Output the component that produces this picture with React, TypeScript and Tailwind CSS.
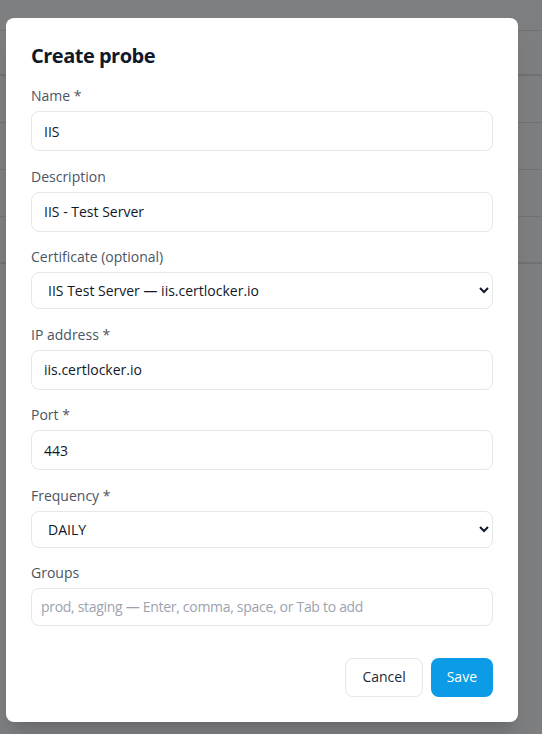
import React from 'react';

const FONT = { fontFamily: '"Open Sans", "Noto Sans", sans-serif' };

// Faint table rows of the page behind the overlay
const ROW_HEIGHTS = ['h-[31px]', 'h-[45px]', 'h-[47px]', 'h-[47px]', 'h-[47px]', 'h-[47px]'];

function Field({ label, children }: { label: string; children: React.ReactNode }) {
  return (
    <div className="flex flex-col">
      <label className="mb-[5px] block h-5 text-sm leading-5 text-[#4b5563]">{label}</label>
      {children}
    </div>
  );
}

const inputClass =
  'h-10 w-full rounded-lg border border-[#e5e7eb] bg-white px-3 text-sm text-[#111827] outline-none';
const selectClass =
  'h-[37px] w-full rounded-lg border border-[#e5e7eb] bg-white px-3 text-sm text-[#111827] outline-none';

export default function App() {
  return (
    <div className="relative h-[734px] w-full overflow-hidden bg-[#7d7e80]" style={FONT}>
      {/* page behind the dialog */}
      <div className="flex flex-col">
        {ROW_HEIGHTS.map((h, i) => (
          <div
            key={i}
            className={`${h} border-b ${i === 1 || i === 5 ? 'border-b-2' : ''} border-[#707173]`}
          />
        ))}
      </div>

      {/* dialog */}
      <div className="absolute left-[6px] top-[18px] w-[512px] rounded-lg bg-white px-[25px] pt-6 pb-[25px] shadow-xl">
        <h2 className="text-xl font-bold leading-7 tracking-[-0.5px] text-[#111827]">Create probe</h2>

        <form className="mt-4 flex flex-col gap-[15.5px]">
          <Field label="Name *">
            <input className={inputClass} defaultValue="IIS" />
          </Field>
          <Field label="Description">
            <input className={inputClass} defaultValue="IIS - Test Server" />
          </Field>
          <Field label="Certificate (optional)">
            <select className={selectClass} defaultValue="iis">
              <option value="">None</option>
              <option value="iis">IIS Test Server — iis.certlocker.io</option>
            </select>
          </Field>
          <Field label="IP address *">
            <input className={inputClass} defaultValue="iis.certlocker.io" />
          </Field>
          <Field label="Port *">
            <input className={inputClass} defaultValue="443" />
          </Field>
          <Field label="Frequency *">
            <select className={selectClass} defaultValue="DAILY">
              <option value="HOURLY">HOURLY</option>
              <option value="DAILY">DAILY</option>
              <option value="WEEKLY">WEEKLY</option>
            </select>
          </Field>
          <Field label="Groups">
            <input
              className="h-[37.5px] w-full rounded-lg border border-[#e5e7eb] bg-white px-[9px] text-sm tracking-[-0.3px] text-[#111827] outline-none placeholder:text-[#9ca3af]"
              placeholder="prod, staging — Enter, comma, space, or Tab to add"
            />
          </Field>
        </form>

        <div className="mt-8 flex justify-end gap-2">
          <button className="h-[39px] rounded-lg border border-[#e5e7eb] bg-white px-4 text-sm text-[#1f2937]">
            Cancel
          </button>
          <button className="h-[39px] rounded-lg bg-[#0c9be6] px-4 text-sm font-medium text-white">
            Save
          </button>
        </div>
      </div>
    </div>
  );
}
